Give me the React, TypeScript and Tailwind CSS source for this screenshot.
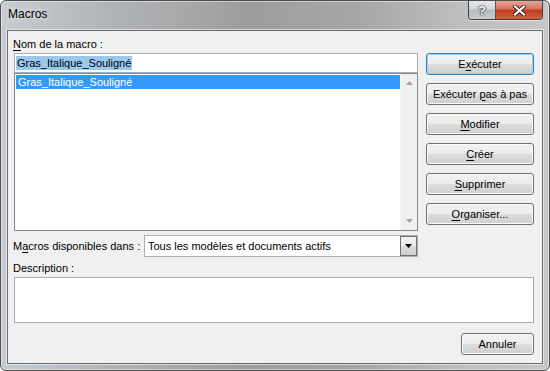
import type { ReactNode } from 'react'

const ui = "font-['Liberation_Sans',Arial,sans-serif] text-[11px] text-black"

function Btn({ children, def, className = '' }: { children: ReactNode; def?: boolean; className?: string }) {
  return (
    <div
      className={`flex h-[22px] items-center justify-center rounded-[3px] border bg-[linear-gradient(#f2f2f2,#ebebeb_50%,#dddddd_50%,#cfcfcf)] ${
        def ? 'border-[#3c7fb1] shadow-[inset_0_0_0_1px_#8fd6f6]' : 'border-[#707070] shadow-[inset_0_0_0_1px_#fcfcfc]'
      } ${className}`}
    >
      <span className="leading-none">{children}</span>
    </div>
  )
}

function U({ children }: { children: ReactNode }) {
  return <span className="underline decoration-1 underline-offset-[2px]">{children}</span>
}

function Arrow({ down }: { down?: boolean }) {
  return (
    <svg width="7" height="4" viewBox="0 0 7 4">
      <path d={down ? 'M0 0h7L3.5 4z' : 'M0 4h7L3.5 0z'} fill="#a3a3a3" />
    </svg>
  )
}

export default function App() {
  return (
    <div
      className={`${ui} flex h-[371px] w-[550px] flex-col rounded-[6px] border border-[#4e4e4e] bg-[linear-gradient(90deg,#c6ccd2,#b1b4b7_20%,#9d9d9d_45%,#a6a6a6_65%,#bfbfbf_85%,#c6c6c6)] px-[6px] pb-[6px] shadow-[inset_0_0_0_1px_rgba(255,255,255,0.45)]`}
    >
      {/* title bar */}
      <div className="flex h-[29px] items-start justify-between">
        <span className="pl-[1px] pt-[6px] text-[12px] leading-[15px] [text-shadow:0_0_6px_rgba(255,255,255,0.9)]">
          Macros
        </span>
        <div className="flex h-[19px] overflow-hidden rounded-b-[4px] border border-t-0 border-[#3f3f3f] shadow-[0_1px_0_rgba(255,255,255,0.5)]">
          <div className="flex w-[27px] items-center justify-center border-r border-[#555] bg-[linear-gradient(#e6e9ec,#d2d5d8_45%,#b5b9bd_50%,#c9cdd0)]">
            <span className="text-[13px] font-bold leading-none text-white [text-shadow:0_0_1px_#222,0_0_1px_#222,0_0_2px_#333]">
              ?
            </span>
          </div>
          <div className="flex w-[46px] items-center justify-center bg-[linear-gradient(#e7a595,#d47560_45%,#c23b1e_50%,#d4603f)]">
            <svg width="13" height="11" viewBox="0 0 13 11">
              <path d="M2 1.5l9 8M11 1.5l-9 8" stroke="#3a1a12" strokeWidth="4" strokeLinecap="square" />
              <path d="M2 1.5l9 8M11 1.5l-9 8" stroke="#fff" strokeWidth="2.2" strokeLinecap="square" />
            </svg>
          </div>
        </div>
      </div>

      {/* client area */}
      <div className="flex flex-1 flex-col border border-[#6b6b6b] bg-[#f0f0f0] pl-[6px] pr-[8px] pt-[6px] shadow-[0_0_0_1px_rgba(255,255,255,0.55)]">
        <div className="flex gap-[8px]">
          <div className="flex w-[404px] flex-col">
            <div className="-ml-px h-[15px] leading-[15px]">
              <U>N</U>om de la macro :
            </div>
            <div className="mt-[1px] flex h-[20px] items-center border border-[#abadb3] bg-white pl-[1px]">
              <span className="bg-[#99c9ef] px-[1px] leading-[14px]">Gras_Italique_Souligné</span>
            </div>
            <div className="flex h-[158px] border border-[#828790] bg-white">
              <div className="flex-1 pl-[1px] pt-[1px]">
                <div className="h-[14px] bg-[#3399ff] pl-[2px] leading-[14px] text-white">Gras_Italique_Souligné</div>
              </div>
              <div className="flex w-[17px] flex-col items-center justify-between border-l border-[#f7f7f7] bg-[#f0f0f0] py-[7px]">
                <Arrow />
                <Arrow down />
              </div>
            </div>
            <div className="mt-[4px] flex h-[22px] items-center">
              <span className="-ml-px w-[131px]">
                M<U>a</U>cros disponibles dans :
              </span>
              <div className="flex h-full flex-1 items-center border border-[#abadb3] bg-white">
                <span className="flex-1 pl-[3px]">Tous les modèles et documents actifs</span>
                <div className="flex h-[20px] w-[17px] items-center justify-center border border-[#707070] bg-[linear-gradient(#f2f2f2,#ebebeb_50%,#dddddd_50%,#cfcfcf)]">
                  <svg width="7" height="4" viewBox="0 0 7 4">
                    <path d="M0 0h7L3.5 4z" fill="#000" />
                  </svg>
                </div>
              </div>
            </div>
          </div>

          <div className="flex w-[108px] flex-col gap-[8px] pt-[16px]">
            <Btn def>
              E<U>x</U>écuter
            </Btn>
            <Btn>
              Exécuter <U>p</U>as à pas
            </Btn>
            <Btn>
              <U>M</U>odifier
            </Btn>
            <Btn>
              <U>C</U>réer
            </Btn>
            <Btn>
              <U>S</U>upprimer
            </Btn>
            <Btn>
              <U>O</U>rganiser...
            </Btn>
          </div>
        </div>

        <div className="-ml-px mt-[4px] h-[15px] leading-[15px]">Description :</div>
        <div className="mt-[1px] h-[46px] border border-[#abadb3] bg-white" />
        <div className="mt-[10px] flex justify-end">
          <Btn className="w-[73px]">Annuler</Btn>
        </div>
      </div>
    </div>
  )
}
